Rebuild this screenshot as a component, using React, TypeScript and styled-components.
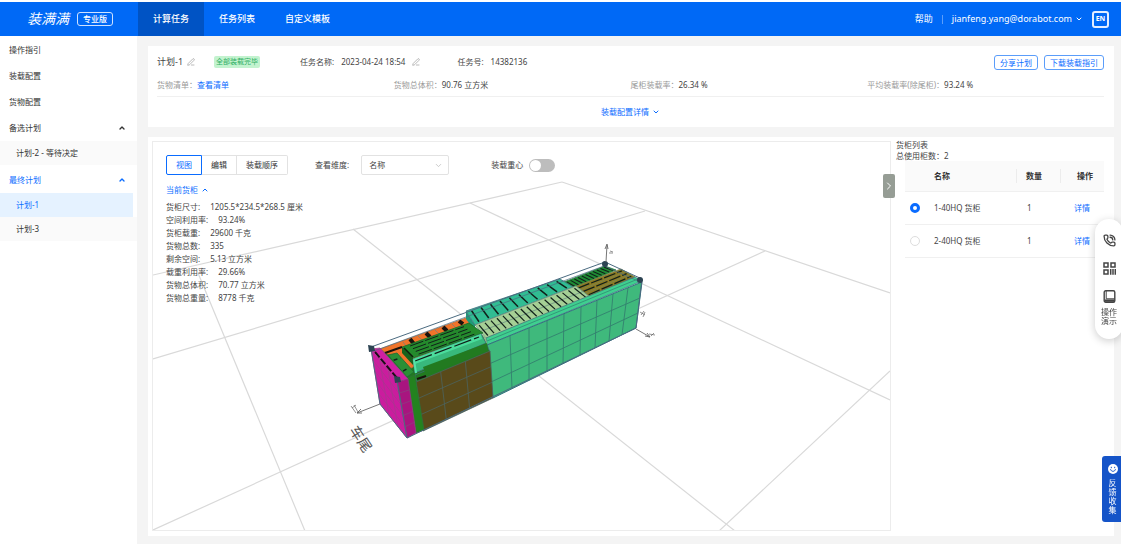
import React from "react";
import styled, { createGlobalStyle } from "styled-components";
import { ChevronDown, ChevronRight, ChevronUp, PenLine, PhoneCall } from "lucide-react";

const blue = "#0a6cff";

const GlobalStyle = createGlobalStyle`
  * { box-sizing: border-box; }
  body {
    margin: 0;
    background: #fff;
    color: #444;
    font-family: "Noto Sans", "Noto Sans CJK SC", sans-serif;
    font-size: 8px;
    line-height: 12px;
  }
  button, input, select { font: inherit; color: inherit; margin: 0; }
  button { cursor: pointer; }
  ul, dl, dd, p, h1, h2 { margin: 0; padding: 0; font: inherit; }
  ul { list-style: none; }
  a { text-decoration: none; color: inherit; }
  svg { flex: none; }
`;

/* ---------- header ---------- */

const Header = styled.header`
  display: flex;
  align-items: stretch;
  height: 34px;
  margin-top: 2px;
  background: #0069f6;
  color: #fff;
  font-size: 9px;
`;

const Brand = styled.div`
  display: flex;
  align-items: center;
  gap: 8px;
  width: 138px;
  padding-left: 27px;
`;

const BrandName = styled.span`
  font-size: 14px;
  line-height: 16px;
  font-style: italic;
`;

const Edition = styled.span`
  border: 1px solid #cfe2ff;
  border-radius: 3px;
  padding: 0 5px;
  font-size: 8px;
  line-height: 12px;
  font-weight: 500;
`;

const Nav = styled.nav`
  display: flex;
  flex: 1;
`;

const Tab = styled.a<{ $active?: boolean }>`
  display: flex;
  align-items: center;
  padding: 0 15px;
  font-weight: 500;
  background: ${(p) => (p.$active ? "#0053c4" : "transparent")};
`;

const Account = styled.div`
  display: flex;
  align-items: center;
  gap: 9px;
  padding-right: 12px;
`;

const Separator = styled.span`
  width: 1px;
  height: 9px;
  background: #5b9dfa;
`;

const AccountButton = styled.button`
  display: flex;
  align-items: center;
  gap: 3px;
  padding: 0;
  border: 0;
  background: none;
`;

const LangButton = styled.button`
  width: 17px;
  height: 17px;
  padding: 0;
  border: 2px solid #e3eeff;
  border-radius: 3px;
  background: none;
  font-size: 7px;
  line-height: 12px;
  font-weight: 700;
`;

/* ---------- page frame ---------- */

const Body = styled.div`
  display: flex;
  align-items: stretch;
`;

const Sidebar = styled.aside`
  flex: none;
  width: 137px;
  padding-top: 1px;
`;

const MenuItem = styled.a<{ $active?: boolean }>`
  display: flex;
  align-items: center;
  justify-content: space-between;
  height: 26px;
  padding: 0 11px 0 9px;
  color: ${(p) => (p.$active ? blue : "#333")};
`;

const SubMenu = styled.ul`
  padding-bottom: 2px;
`;

const SubItem = styled.a<{ $active?: boolean }>`
  display: flex;
  align-items: center;
  height: 24px;
  margin-right: ${(p) => (p.$active ? 4 : 0)}px;
  padding-left: 16px;
  background: ${(p) => (p.$active ? "#e5f2ff" : "#fafafa")};
  color: ${(p) => (p.$active ? blue : "#333")};
`;

const Main = styled.main`
  display: flex;
  flex: 1;
  flex-direction: column;
  gap: 10px;
  min-width: 0;
  padding: 10px 7px 8px 11px;
  background: #f4f4f4;
`;

/* ---------- summary ---------- */

const Summary = styled.section`
  display: flex;
  flex-direction: column;
  padding: 7px 10px 0 9px;
  background: #fff;
`;

const TitleRow = styled.div`
  display: flex;
  align-items: center;
  height: 18px;
`;

const PlanName = styled.h1`
  display: flex;
  align-items: center;
  gap: 4px;
  width: 57px;
  font-size: 9px;
`;

const StatusTag = styled.span`
  margin-right: 40px;
  padding: 0 2px;
  border-radius: 2px;
  background: #c3f3cf;
  color: #2eae63;
  font-size: 7px;
  line-height: 12px;
`;

const Field = styled.span`
  display: flex;
  align-items: center;
  gap: 7px;
  margin-right: 37px;
`;

const IconButton = styled.button`
  display: flex;
  padding: 0;
  border: 0;
  background: none;
  color: #999;
`;

const Actions = styled.div`
  display: flex;
  gap: 6px;
  margin-left: auto;
`;

const OutlineButton = styled.button`
  height: 15px;
  padding: 0 5px;
  border: 1px solid #5b9dfa;
  border-radius: 3px;
  background: #fff;
  color: ${blue};
  line-height: 13px;
`;

const Stats = styled.dl`
  display: grid;
  grid-template-columns: repeat(4, 1fr);
  align-items: center;
  height: 26px;
  padding-top: 2px;
  border-bottom: 1px solid #f0f0f0;
`;

const Stat = styled.div`
  display: flex;
  dt { color: #999; }
`;

const TextLink = styled.a`
  color: ${blue};
`;

const TextButton = styled.button<{ $center?: boolean }>`
  display: flex;
  align-items: center;
  align-self: ${(p) => (p.$center ? "center" : "flex-start")};
  gap: 3px;
  height: ${(p) => (p.$center ? 30 : 14)}px;
  padding: 0;
  border: 0;
  background: none;
  color: ${blue};
`;

/* ---------- workspace ---------- */

const Workspace = styled.section`
  display: flex;
  padding: 4px 4px 5px;
  background: #fff;
`;

const Viewer = styled.div`
  position: relative;
  display: grid;
  flex: 1;
  min-width: 0;
  border: 1px solid #ececec;
  > * { grid-area: 1 / 1; }
`;

const SceneSvg = styled.svg`
  width: 100%;
  height: 100%;
  min-height: 388px;
`;

const Overlay = styled.div`
  z-index: 1;
  display: flex;
  flex-direction: column;
  align-self: start;
  gap: 8px;
  padding: 13px;
`;

const Toolbar = styled.div`
  display: flex;
  align-items: center;
  height: 20px;
`;

const Segments = styled.div`
  display: flex;
  margin-right: 27px;
`;

const Segment = styled.button<{ $active?: boolean }>`
  height: 20px;
  padding: 0 9px;
  border: 1px solid ${(p) => (p.$active ? blue : "#e2e2e2")};
  border-left-width: ${(p) => (p.$active ? 1 : 0)}px;
  background: #fff;
  color: ${(p) => (p.$active ? blue : "#333")};
  &:first-child { border-radius: 2px 0 0 2px; }
  &:last-child { border-radius: 0 2px 2px 0; }
`;

const Label = styled.label`
  display: flex;
  align-items: center;
  gap: 12px;
  margin-right: 42px;
`;

const SelectBox = styled.span`
  display: grid;
  align-items: center;
  width: 88px;
  color: #bbb;
  > * { grid-area: 1 / 1; }
  > svg { justify-self: end; margin-right: 6px; pointer-events: none; }
`;

const Select = styled.select`
  height: 20px;
  padding: 0 7px;
  appearance: none;
  border: 1px solid #e2e2e2;
  border-radius: 2px;
  background: #fff;
  color: #444;
`;

const SwitchLabel = styled(Label)`
  gap: 6px;
`;

const Switch = styled.input`
  width: 26px;
  height: 13px;
  padding: 1px;
  appearance: none;
  border-radius: 7px;
  background: #bdbdbd;
  &::before {
    content: "";
    display: block;
    width: 11px;
    height: 11px;
    border-radius: 50%;
    background: #fff;
  }
  &:checked::before { margin-left: auto; }
`;

const Details = styled.dl`
  display: flex;
  flex-direction: column;
  margin-top: -5px;
  line-height: 13px;
`;

const Detail = styled.div`
  display: flex;
  gap: 10px;
`;

const CollapseHandle = styled.button`
  position: absolute;
  top: 32px;
  right: -5px;
  z-index: 2;
  display: flex;
  align-items: center;
  justify-content: center;
  width: 12px;
  height: 24px;
  padding: 0;
  border: 0;
  border-radius: 2px;
  background: #969d95;
  color: #fff;
`;

const Containers = styled.aside`
  flex: none;
  width: 219px;
  margin-top: -2px;
  padding: 0 6px 0 5px;
  line-height: 11px;
`;

const ContainerTable = styled.table`
  width: 199px;
  margin-left: 9px;
  border-collapse: collapse;
  table-layout: fixed;
  th, td {
    height: 33px;
    padding: 0 0 0 10px;
    border-bottom: 1px solid #f0f0f0;
    text-align: left;
  }
  th {
    height: 30px;
    background: #fafafa;
    font-weight: 600;
    color: #333;
  }
  th:nth-child(n + 3) {
    background: linear-gradient(#ececec, #ececec) left center / 1px 14px no-repeat #fafafa;
  }
  th:first-child, td:first-child { padding-left: 5px; }
  th:nth-child(2), td:nth-child(2) { padding-left: 9px; }
  th:last-child { padding-left: 17px; }
  td:last-child { padding-left: 14px; }
  td:nth-child(3) { padding-left: 11px; }
`;

const Radio = styled.input`
  display: block;
  width: 10px;
  height: 10px;
  appearance: none;
  border: 1px solid #ddd;
  border-radius: 50%;
  background: #fff;
  &:checked { border: 3px solid ${blue}; }
`;

/* ---------- floating widgets ---------- */

const Dock = styled.div`
  position: fixed;
  top: 219px;
  right: -2px;
  z-index: 3;
  display: flex;
  flex-direction: column;
  align-items: center;
  gap: 15px;
  width: 28px;
  padding: 15px 0 14px;
  border-radius: 14px;
  background: #fff;
  box-shadow: 0 2px 8px rgba(0, 0, 0, 0.2);
`;

const DockButton = styled.button`
  display: flex;
  flex-direction: column;
  align-items: center;
  gap: 4px;
  width: 18px;
  padding: 0;
  border: 0;
  background: none;
  color: #444;
  line-height: 9px;
`;

const Feedback = styled.button`
  position: fixed;
  top: 456px;
  right: 0;
  z-index: 3;
  display: flex;
  flex-direction: column;
  align-items: center;
  gap: 4px;
  width: 19px;
  height: 66px;
  padding: 8px 4px 0 6px;
  border: 0;
  border-radius: 3px 0 0 3px;
  background: #1554c8;
  color: #fff;
  line-height: 9px;
`;

/* ---------- 3D scene ---------- */

type Pt = [number, number];
const mix = (a: Pt, b: Pt, t: number): Pt => [a[0] + (b[0] - a[0]) * t, a[1] + (b[1] - a[1]) * t];
const pts = (list: Pt[]) => list.map((p) => p.join(",")).join(" ");

/* A filled quadrilateral a-b-c-d with an evenly spaced grid over it. */
function Face({ q, fill, cols = 1, rows = 1, edge = "#3f6f7d" }: { q: [Pt, Pt, Pt, Pt]; fill: string; cols?: number; rows?: number; edge?: string }) {
  const [a, b, c, d] = q;
  const lines: [Pt, Pt][] = [];
  for (let i = 1; i < cols; i++) lines.push([mix(a, b, i / cols), mix(d, c, i / cols)]);
  for (let i = 1; i < rows; i++) lines.push([mix(a, d, i / rows), mix(b, c, i / rows)]);
  return (
    <g stroke={edge} strokeWidth="0.8">
      <polygon points={pts(q)} fill={fill} />
      {lines.map(([s, e], i) => (
        <line key={i} x1={s[0]} y1={s[1]} x2={e[0]} y2={e[1]} />
      ))}
    </g>
  );
}

/* Dark slots running from edge a-b to edge d-c of a pallet top. */
function Slots({ q, count, width = 1.6, dash, inset = 0.1 }: { q: [Pt, Pt, Pt, Pt]; count: number; width?: number; dash?: string; inset?: number }) {
  const [a, b, c, d] = q;
  return (
    <g stroke="#10201a" strokeWidth={width} strokeDasharray={dash}>
      {Array.from({ length: count }, (_, i) => {
        const t = (i + 0.5) / count;
        const s = mix(a, b, t);
        const e = mix(d, c, t);
        const s2 = mix(s, e, inset);
        const e2 = mix(s, e, 1 - inset);
        return <line key={i} x1={s2[0]} y1={s2[1]} x2={e2[0]} y2={e2[1]} />;
      })}
    </g>
  );
}

const floor: [Pt, Pt][] = [
  [[153, 275], [562, 182]],
  [[562, 182], [890, 293]],
  [[153, 359], [645, 211]],
  [[153, 530], [765, 251]],
  [[198, 273], [305, 531]],
  [[353, 229], [735, 531]],
  [[470, 203], [890, 400]],
  [[890, 371], [719, 531]],
];

const greenTop = [487, 510, 529, 547, 564, 581, 597, 613, 628, 642];
const greenBottom = [493, 512, 529, 547, 563, 580, 595, 609, 622, 636];
const topY = (x: number) => 345 - ((x - 487) * 63) / 155;
const bottomY = (x: number) => 398 - ((x - 493) * 70) / 143;

const teal: [Pt, Pt, Pt, Pt] = [[466, 311], [560, 279], [573, 287], [475, 325]];
const pale: [Pt, Pt, Pt, Pt] = [[475, 325], [576, 286], [590, 297], [486, 338]];
const farGreen: [Pt, Pt, Pt, Pt] = [[564, 282], [605, 266], [616, 270], [574, 288]];
const olive: [Pt, Pt, Pt, Pt] = [[574, 287], [621, 269], [635, 277], [590, 297]];
const pallet: [Pt, Pt, Pt, Pt] = [[402, 347], [469, 323], [483, 333], [413, 358]];
const nearSlats: [Pt, Pt, Pt, Pt] = [[388, 355], [397, 353], [414, 372], [407, 377]];

function Scene() {
  return (
    <SceneSvg viewBox="153 142 737 388" preserveAspectRatio="xMidYMid slice" role="img" aria-label="3D">
      <g stroke="#d9d9d9" strokeWidth="1.2">
        {floor.map(([a, b], i) => (
          <line key={i} x1={a[0]} y1={a[1]} x2={b[0]} y2={b[1]} />
        ))}
      </g>

      <polygon points="371,348 605,263 642,280 636,328 407,438 380,404" fill="#fff" />
      <polygon points="380,349 400,352 470,325 487,339 493,355 416,384 406,380" fill="#227a20" />

      <Face q={[[380, 349], [466, 318], [476, 325], [410, 369]]} fill="#f0742a" edge="#b06a3c" />
      <g stroke="#1b120c" strokeWidth="4">
        <path d="M385 353l17-6" strokeWidth="2" />
        <path d="M410 339l4 5M426 333l4 4M443 327l4 4M459 321l4 3" />
      </g>
      <g stroke="#7e7f78" strokeWidth="0.8">
        <path d="M418 336l4 4M435 330l4 4M452 324l4 4M403 342l3 4" />
      </g>

      <Face q={farGreen} fill="#1f8a33" edge="#2b7a45" />
      <Slots q={farGreen} count={11} width={1.1} />
      <Face q={olive} fill="#8c7a22" rows={3} edge="#7b8450" />
      <Slots q={[olive[0], olive[3], olive[2], olive[1]]} count={3} width={1.3} dash="12 2" inset={0.03} />

      <polygon points="466,311 475,325 475,331 466,319" fill="#1f9a78" />
      <Face q={teal} fill="#31bd93" />
      <Slots q={teal} count={10} width={1.5} />
      <Face q={pale} fill="#a5cf95" rows={2} edge="#6d9184" />
      <Slots q={pale} count={17} width={1.2} />

      <polygon points="486,338 635,277 642,281 487,345" fill="#3fcf8f" stroke="#3f6f7d" strokeWidth="0.7" />
      <polygon points="475,326 486,338 488,348 482,334" fill="#8fb98a" />
      <path d="M487 341L638 279" stroke="#2f7f70" strokeWidth="0.7" />

      <polygon points="487,345 642,282 636,328 493,398" fill="#3fb97c" stroke="#33707f" strokeWidth="1" />
      <g stroke="#33806f" strokeWidth="0.9">
        {greenTop.slice(1, -1).map((x, i) => (
          <line key={x} x1={x} y1={topY(x)} x2={greenBottom[i + 1]} y2={bottomY(greenBottom[i + 1])} />
        ))}
        <path d="M489 364L640 298M491 382L638 313" />
      </g>

      <polygon points="402,347 413,358 413,365 402,353" fill="#17631c" />
      <Face q={pallet} fill="#248a2c" edge="#1b6a2a" />
      <Slots q={[pallet[0], pallet[3], pallet[2], pallet[1]]} count={4} width={1} dash="14 2" />
      <path d="M404 348l9 9" stroke="#0d1f0d" strokeWidth="1.6" />

      <Face q={nearSlats} fill="#2b8f35" edge="#1e6a35" />
      <Slots q={[nearSlats[0], nearSlats[3], nearSlats[2], nearSlats[1]]} count={2} width={1.6} dash="4 3" />

      <Face q={[[415, 375], [487, 345], [490, 352], [417, 383]]} fill="#227a20" />
      <path d="M417 379l9-3" stroke="#16110a" strokeWidth="2" />
      <Face q={[[413, 359], [481, 334], [486, 343], [415, 373]]} fill="#38b97c" />
      <path d="M413 359l68-25 1 5-67 25z" fill="#4bdc9c" />
      <path d="M415 361l64-24" stroke="#10201a" strokeWidth="1.2" strokeDasharray="18 3" />
      <path d="M414 360l2 13" stroke="#55e5a8" strokeWidth="2" />
      <path d="M423 367l64-24 1 8-62 24z" fill="#227a20" />

      <Face q={[[416, 382], [490, 351], [493, 398], [423, 431]]} fill="#594a1a" cols={3} rows={3} edge="#4b6360" />
      <Face q={[[407, 378], [415, 375], [424, 430], [416, 433]]} fill="#23821f" edge="#2f6f3b" />
      <Face q={[[371, 349], [380, 348], [408, 379], [397, 382]]} fill="#cf1fa3" edge="#a0448f" />
      <path d="M375 352L397 378" stroke="#1b0f18" strokeWidth="2" strokeDasharray="7 2" />
      <Face q={[[371, 349], [397, 382], [407, 438], [380, 404]]} fill="#cb1c9e" cols={3} rows={5} edge="#a8368f" />
      <Face q={[[397, 382], [408, 379], [416, 433], [407, 438]]} fill="#a8157f" rows={5} edge="#8a3d7f" />

      <g fill="none" stroke="#4b6b80" strokeWidth="1">
        <path d="M371 347L605 262L642 279L636 328L407 438L380 404L371 348" />
        <path d="M374 351L604 266L638 281" strokeWidth="0.7" />
        <path d="M397 380L407 438" />
      </g>
      <g fill="#2c4352">
        <path d="M368 345l6 1 1 5-6 1z" />
        <path d="M394 376l6 1 1 5-6 1z" />
        <circle cx="605" cy="264" r="3" />
        <circle cx="640" cy="280" r="3" />
      </g>

      <g fill="none" stroke="#666" strokeWidth="0.9">
        <path d="M606 262L607 245M605 249l2-5 1 5" />
        <path d="M380 404L357 413M361 409l-4 4 5 0" />
        <path d="M636 329L650 337M645 336l5 1-3-4" />
        <path d="M610 251l3 1M609 253l4 0M351 406l5 7M354 405l4 7M352 408l4-3M640 312l5 3M641 315l3-4M643 317l2-5M649 334l6 1M651 336l3-3" strokeWidth="0.7" />
      </g>
      <text transform="translate(349 430) rotate(57)" fontSize="14" fill="#555">车尾</text>
    </SceneSvg>
  );
}

const QrIcon = () => (
  <svg width="13" height="13" viewBox="0 0 13 13" fill="none" stroke="currentColor" strokeWidth="1.5">
    <rect x="1" y="1" width="4" height="4" />
    <rect x="8" y="1" width="4" height="4" />
    <rect x="1" y="8" width="4" height="4" />
    <path d="M7.7 7v5.7M10 7v5.7M12.3 7v5.7" />
  </svg>
);

const BookIcon = () => (
  <svg width="13" height="13" viewBox="0 0 13 13" fill="none" stroke="currentColor" strokeWidth="1.4">
    <rect x="1.2" y="0.8" width="10.6" height="11.4" rx="1.5" />
    <path d="M3.2 1v7.8h8.4" strokeWidth="1" />
    <path d="M1.5 10.6h10" strokeWidth="2.4" />
  </svg>
);

const SmileIcon = () => (
  <svg width="10" height="10" viewBox="0 0 10 10">
    <circle cx="5" cy="5" r="5" fill="#fff" />
    <g fill="none" stroke="#1554c8" strokeLinecap="round">
      <path d="M3.3 3.2v.6M6.7 3.2v.6M2.6 5.6c.6 2.4 4.2 2.4 4.8 0" />
    </g>
  </svg>
);

const details = [
  ["货柜尺寸:", "1205.5*234.5*268.5 厘米"],
  ["空间利用率:", "93.24%"],
  ["货柜载重:", "29600 千克"],
  ["货物总数:", "335"],
  ["剩余空间:", "5.13 立方米"],
  ["载重利用率:", "29.66%"],
  ["货物总体积:", "70.77 立方米"],
  ["货物总重量:", "8778 千克"],
];

const containers = ["1-40HQ 货柜", "2-40HQ 货柜"];

export default function App() {
  return (
    <>
      <GlobalStyle />
      <Header>
        <Brand>
          <BrandName>装满满</BrandName>
          <Edition>专业版</Edition>
        </Brand>
        <Nav>
          <Tab href="#" $active>计算任务</Tab>
          <Tab href="#">任务列表</Tab>
          <Tab href="#">自定义模板</Tab>
        </Nav>
        <Account>
          <a href="#">帮助</a>
          <Separator />
          <AccountButton>
            jianfeng.yang@dorabot.com
            <ChevronDown size={8} strokeWidth={3} />
          </AccountButton>
          <LangButton>EN</LangButton>
        </Account>
      </Header>

      <Body>
        <Sidebar>
          <MenuItem href="#">操作指引</MenuItem>
          <MenuItem href="#">装载配置</MenuItem>
          <MenuItem href="#">货物配置</MenuItem>
          <MenuItem href="#">备选计划 <ChevronUp size={8} strokeWidth={4} /></MenuItem>
          <SubMenu>
            <li><SubItem href="#">计划-2 - 等待决定</SubItem></li>
          </SubMenu>
          <MenuItem href="#" $active>最终计划 <ChevronUp size={8} strokeWidth={4} /></MenuItem>
          <SubMenu>
            <li><SubItem href="#" $active>计划-1</SubItem></li>
            <li><SubItem href="#">计划-3</SubItem></li>
          </SubMenu>
        </Sidebar>

        <Main>
          <Summary>
            <TitleRow>
              <PlanName>
                计划-1
                <IconButton aria-label="编辑计划"><PenLine size={8} /></IconButton>
              </PlanName>
              <StatusTag>全部装载完毕</StatusTag>
              <Field>
                <span>任务名称:</span>
                <span>2023-04-24 18:54</span>
                <IconButton aria-label="编辑任务"><PenLine size={8} /></IconButton>
              </Field>
              <Field>
                <span>任务号:</span>
                <span>14382136</span>
              </Field>
              <Actions>
                <OutlineButton>分享计划</OutlineButton>
                <OutlineButton>下载装载指引</OutlineButton>
              </Actions>
            </TitleRow>
            <Stats>
              <Stat><dt>货物清单：</dt><dd><TextLink href="#">查看清单</TextLink></dd></Stat>
              <Stat><dt>货物总体积：</dt><dd>90.76 立方米</dd></Stat>
              <Stat><dt>尾柜装载率：</dt><dd>26.34 %</dd></Stat>
              <Stat><dt>平均装载率(除尾柜)：</dt><dd>93.24 %</dd></Stat>
            </Stats>
            <TextButton $center>装载配置详情 <ChevronDown size={8} strokeWidth={3} /></TextButton>
          </Summary>

          <Workspace>
            <Viewer>
              <Scene />
              <Overlay>
                <Toolbar>
                  <Segments>
                    <Segment $active>视图</Segment>
                    <Segment>编辑</Segment>
                    <Segment>装载顺序</Segment>
                  </Segments>
                  <Label>
                    查看维度:
                    <SelectBox>
                      <Select defaultValue="name"><option value="name">名称</option></Select>
                      <ChevronDown size={9} />
                    </SelectBox>
                  </Label>
                  <SwitchLabel>
                    装载重心
                    <Switch type="checkbox" role="switch" />
                  </SwitchLabel>
                </Toolbar>
                <TextButton>当前货柜 <ChevronUp size={8} strokeWidth={3} /></TextButton>
                <Details>
                  {details.map(([name, value]) => (
                    <Detail key={name}><dt>{name}</dt><dd>{value}</dd></Detail>
                  ))}
                </Details>
              </Overlay>
              <CollapseHandle aria-label="收起"><ChevronRight size={12} /></CollapseHandle>
            </Viewer>

            <Containers>
              <h2>货柜列表</h2>
              <p>总使用柜数：2</p>
              <ContainerTable>
                <colgroup>
                  <col width={20} />
                  <col width={91} />
                  <col width={44} />
                  <col width={44} />
                </colgroup>
                <thead>
                  <tr><th /><th>名称</th><th>数量</th><th>操作</th></tr>
                </thead>
                <tbody>
                  {containers.map((name, i) => (
                    <tr key={name}>
                      <td><Radio type="radio" name="container" aria-label={name} defaultChecked={i === 0} /></td>
                      <td>{name}</td>
                      <td>1</td>
                      <td><TextLink href="#">详情</TextLink></td>
                    </tr>
                  ))}
                </tbody>
              </ContainerTable>
            </Containers>
          </Workspace>
        </Main>
      </Body>

      <Dock>
        <DockButton aria-label="电话"><PhoneCall size={13} strokeWidth={2.4} /></DockButton>
        <DockButton aria-label="二维码"><QrIcon /></DockButton>
        <DockButton><BookIcon />操作演示</DockButton>
      </Dock>
      <Feedback><SmileIcon />反馈收集</Feedback>
    </>
  );
}
